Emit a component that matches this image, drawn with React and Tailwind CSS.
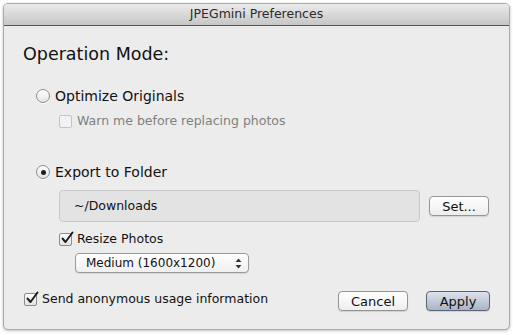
import React from 'react';

function Radio({ checked }) {
  return (
    <span className="w-[14px] h-[14px] rounded-full border border-[#8c8c8c] bg-gradient-to-b from-[#ffffff] to-[#e4e4e4] shadow-[0_1px_0_rgba(255,255,255,0.8)] flex items-center justify-center shrink-0">
      {checked && <span className="w-[5px] h-[5px] rounded-full bg-[#1e1e1e]" />}
    </span>
  );
}

function Checkbox({ checked, disabled }) {
  return (
    <span
      className={
        'relative w-[13px] h-[13px] rounded-[2px] border flex items-center justify-center shrink-0 ' +
        (disabled
          ? 'border-[#c4c4c4] bg-[#f2f2f2]'
          : 'border-[#8c8c8c] bg-gradient-to-b from-[#ffffff] to-[#e2e2e2]')
      }
    >
      {checked && (
        <svg width="14" height="14" viewBox="0 0 14 14" className="absolute left-[0px] top-[-3px]">
          <path d="M2.5 7.5 L5.5 11 L12.5 1.5" fill="none" stroke="#1e1e1e" strokeWidth="2" strokeLinecap="round" strokeLinejoin="round" />
        </svg>
      )}
    </span>
  );
}

function Button({ children, primary, width }) {
  return (
    <button
      className={
        'h-[20px] rounded-[4px] border text-[13px] leading-none flex items-center justify-center shadow-[0_1px_1px_rgba(0,0,0,0.12)] ' +
        width + ' ' +
        (primary
          ? 'border-[#5c6576] bg-gradient-to-b from-[#dde3ed] to-[#a9b4c6] text-[#111]'
          : 'border-[#949494] bg-gradient-to-b from-[#ffffff] to-[#eeeeee] text-[#111]')
      }
    >
      {children}
    </button>
  );
}

export default function App() {
  return (
    <div className="w-[513px] h-[335px] bg-white p-[3px] font-['DejaVu_Sans',sans-serif] text-[#111]">
      <div className="w-[507px] h-[327px] rounded-[5px] border border-[#a9a9a9] bg-[#ececec] shadow-[0_1px_3px_rgba(0,0,0,0.25)] overflow-hidden flex flex-col">
        <div className="h-[22px] shrink-0 bg-gradient-to-b from-[#ebebeb] to-[#c6c6c6] border-b border-[#555555] flex items-center justify-center text-[12.5px] text-[#2a2a2a]">
          JPEGmini Preferences
        </div>

        <div className="flex-1 flex flex-col pl-[19px] pr-[19px]">
          <div className="mt-[17px] h-[22px] text-[17.5px] leading-[22px]">Operation Mode:</div>

          <div className="mt-[23px] ml-[13px] h-[16px] flex items-center gap-[5px] text-[14px]">
            <Radio />
            <span>Optimize Originals</span>
          </div>

          <div className="mt-[9px] ml-[36px] h-[16px] flex items-center gap-[5px] text-[12.5px] text-[#808080]">
            <Checkbox disabled />
            <span>Warn me before replacing photos</span>
          </div>

          <div className="mt-[35px] ml-[13px] h-[16px] flex items-center gap-[5px] text-[14px]">
            <Radio checked />
            <span>Export to Folder</span>
          </div>

          <div className="mt-[10px] ml-[36px] flex items-center gap-[9px]">
            <div className="w-[361px] h-[32px] rounded-[4px] border border-[#c9c9c9] bg-[#e3e3e3] flex items-center pl-[14px] text-[12.5px]">
              ~/Downloads
            </div>
            <Button width="w-[60px]">Set...</Button>
          </div>

          <div className="mt-[9px] ml-[36px] h-[16px] flex items-center gap-[5px] text-[12.5px]">
            <Checkbox checked />
            <span>Resize Photos</span>
          </div>

          <div className="mt-[6px] ml-[52px] w-[174px] h-[20px] rounded-[4px] border border-[#9a9a9a] bg-gradient-to-b from-[#ffffff] to-[#efefef] shadow-[0_1px_1px_rgba(0,0,0,0.1)] flex items-center pl-[10px] pr-[6px] text-[12px]">
            <span className="flex-1">Medium (1600x1200)</span>
            <svg width="7" height="11" viewBox="0 0 7 11">
              <path d="M0.5 4 L3.5 0.5 L6.5 4 Z" fill="#333" />
              <path d="M0.5 7 L3.5 10.5 L6.5 7 Z" fill="#333" />
            </svg>
          </div>

          <div className="mt-[18px] h-[20px] flex items-center">
            <div className="flex items-center gap-[5px] text-[12.5px] mb-[4px] ml-[1px]">
              <Checkbox checked />
              <span>Send anonymous usage information</span>
            </div>
            <div className="ml-auto flex gap-[18px]">
              <Button width="w-[70px]">Cancel</Button>
              <Button primary width="w-[64px]">Apply</Button>
            </div>
          </div>
        </div>
      </div>
    </div>
  );
}
